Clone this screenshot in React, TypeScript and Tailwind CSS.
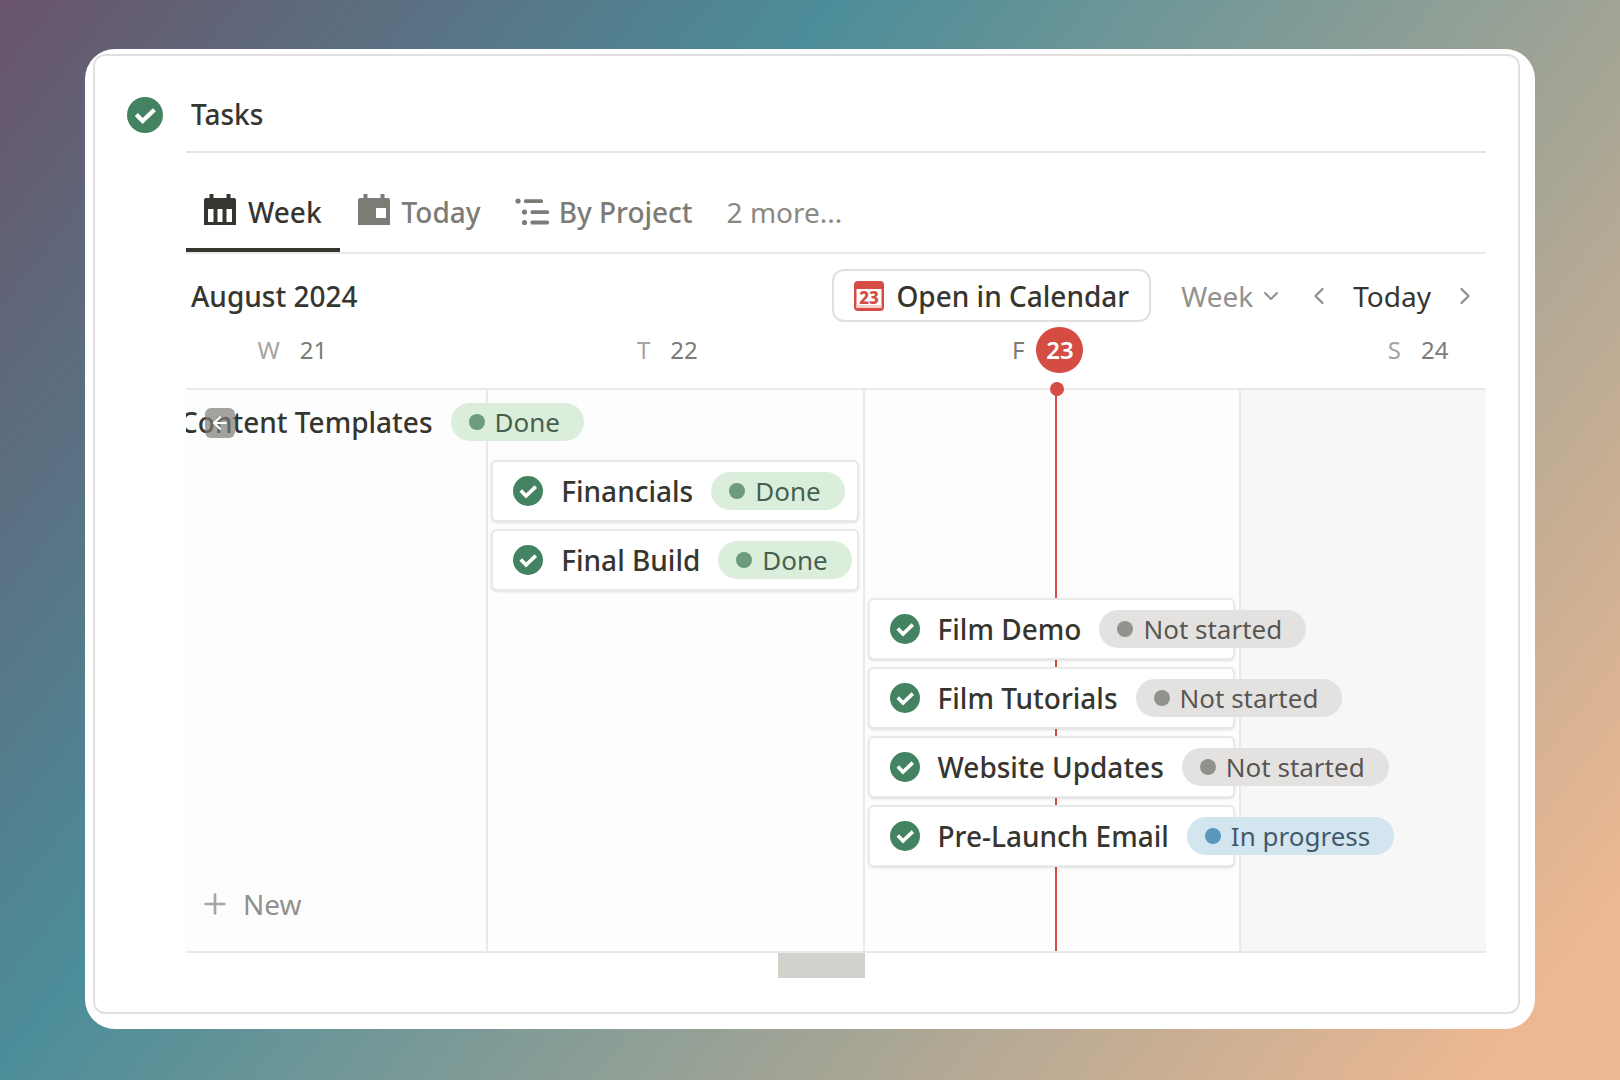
import clsx from "clsx"
import { ArrowLeft, ChevronDown, ChevronLeft, ChevronRight, Plus } from "lucide-react"

type Status = "Done" | "Not started" | "In progress"

const STATUS_STYLES: Record<Status, { pill: string; dot: string }> = {
  Done: { pill: "bg-[#dbeddb] text-[#1c3829]/80", dot: "bg-[#6c9b7d]" },
  "Not started": { pill: "bg-[#e3e2e0] text-[#32302c]/80", dot: "bg-[#91918e]" },
  "In progress": { pill: "bg-[#d3e5ef] text-[#183347]/80", dot: "bg-[#5b97bd]" },
}

type Task = { name: string; status: Status }

const THURSDAY_TASKS: Task[] = [
  { name: "Financials", status: "Done" },
  { name: "Final Build", status: "Done" },
]

const FRIDAY_TASKS: Task[] = [
  { name: "Film Demo", status: "Not started" },
  { name: "Film Tutorials", status: "Not started" },
  { name: "Website Updates", status: "Not started" },
  { name: "Pre-Launch Email", status: "In progress" },
]

function CheckIcon({ className }: { className: string }) {
  return (
    <svg viewBox="0 0 30 30" className={clsx("shrink-0", className)} aria-hidden="true">
      <circle cx="15" cy="15" r="15" fill="#448361" />
      <path d="M7.8 14.6 L13 20 L22.8 10.6" fill="none" stroke="#fff" strokeWidth="3.6" />
    </svg>
  )
}

function WeekIcon() {
  return (
    <svg viewBox="0 0 32 32" className="mb-1 size-8 shrink-0" aria-hidden="true">
      <path
        fill="currentColor"
        fillRule="evenodd"
        d="M5.5 0h4v4h13V0h4v4H30a2 2 0 0 1 2 2v25H0V6a2 2 0 0 1 2-2h3.5zM4 15v13h5.500V15zm9.500 0v13h5V15zm9 0v13H28V15z"
      />
    </svg>
  )
}

function TodayIcon() {
  return (
    <svg viewBox="0 0 32 32" className="mb-1 size-8 shrink-0" aria-hidden="true">
      <path
        fill="currentColor"
        fillRule="evenodd"
        d="M5.5 0h4v4h13V0h4v4H30a2 2 0 0 1 2 2v25H0V6a2 2 0 0 1 2-2h3.5zM18 14v10h10V14z"
      />
    </svg>
  )
}

function ProjectIcon() {
  return (
    <svg viewBox="0 0 34 28" className="h-7 w-[34px] shrink-0" aria-hidden="true" fill="currentColor">
      <circle cx="3" cy="3" r="2.6" />
      <circle cx="9.5" cy="14" r="2.6" />
      <circle cx="9.5" cy="24.5" r="2.6" />
      <rect x="9" y="1.2" width="19" height="3.8" rx="1.5" />
      <rect x="15.5" y="12.2" width="18.5" height="3.8" rx="1.5" />
      <rect x="15.5" y="22.6" width="18.5" height="3.8" rx="1.5" />
    </svg>
  )
}

function CalendarBadge() {
  return (
    <svg viewBox="0 0 30 30" className="size-[30px] shrink-0" aria-hidden="true">
      <rect width="30" height="30" rx="4" fill="#d44c43" />
      <rect x="2.5" y="8" width="25" height="19" fill="#fff" />
      <rect x="2.5" y="24" width="25" height="3" fill="#f4cfcc" />
      <text
        x="15"
        y="23"
        textAnchor="middle"
        fontFamily="Noto Sans, sans-serif"
        fontSize="17"
        fontWeight="800"
        fill="#d44c43"
      >
        23
      </text>
    </svg>
  )
}

function StatusPill({ status }: { status: Status }) {
  const styles = STATUS_STYLES[status]

  return (
    <span
      className={clsx(
        "flex h-[38px] shrink-0 items-center gap-[10px] rounded-full pr-6 pl-[18px] text-[26px] whitespace-nowrap",
        styles.pill
      )}
    >
      <span className={clsx("size-4 rounded-full", styles.dot)} />
      {status}
    </span>
  )
}

function TaskCard({ name, status }: Task) {
  return (
    <li className="flex h-[62px] items-center rounded-md border-2 border-[#e9e9e9] bg-white pl-5 shadow-sm">
      <CheckIcon className="size-[30px]" />
      <span className="mr-[18px] ml-[18px] shrink-0 font-medium whitespace-nowrap">{name}</span>
      <StatusPill status={status} />
    </li>
  )
}

export default function App() {
  return (
    <div className="flex min-h-screen bg-[linear-gradient(128deg,#69546b_0%,#4c8d99_34%,#ecb892_94%)] px-[85px] pt-[49px] pb-[51px] font-['Noto_Sans','Open_Sans',sans-serif] text-[28px] leading-8 text-[#37352f]">
      <main className="flex flex-1 overflow-hidden rounded-[30px] bg-white pt-[5px] pr-[15px] pb-[15px] pl-2">
        <section className="flex min-w-0 flex-1 flex-col rounded-xl border-2 border-[#e0e0e0] px-8">
          <header className="flex h-[97px] items-center">
            <CheckIcon className="mt-5 size-9" />
            <div className="ml-[23px] flex flex-1 self-stretch border-b-2 border-[#e3e3e3] pt-5 pl-[5px]">
              <h1 className="self-center font-medium">Tasks</h1>
            </div>
          </header>

          <div className="ml-[59px] flex flex-col">
            <nav className="flex h-[101px] items-end border-b-2 border-[#e9e9e9] font-medium text-[#7d7b76]">
              <button type="button" className="flex h-[76px] items-center gap-3 border-b-4 border-[#37352f] px-[18px] text-[#37352f]">
                <WeekIcon />
                Week
              </button>
              <button type="button" className="flex h-[76px] items-center gap-3 border-b-4 border-transparent px-[18px]">
                <TodayIcon />
                Today
              </button>
              <button type="button" className="flex h-[76px] items-center gap-[10px] border-b-4 border-transparent pr-[18px] pl-4">
                <ProjectIcon />
                By Project
              </button>
              <button type="button" className="flex h-[76px] items-center border-b-4 border-transparent px-4 font-normal text-[#8a8883]">
                2 more...
              </button>
            </nav>

            <div className="flex items-center pt-[15px] pr-[7px] pl-[5px]">
              <h2 className="flex-1 font-medium">August 2024</h2>
              <button type="button" className="flex h-[53px] items-center gap-3 rounded-xl border-2 border-[#e0e0e0] px-5 font-medium">
                <CalendarBadge />
                Open in Calendar
              </button>
              <button type="button" className="ml-[30px] flex items-center gap-1.5 text-[#91918e]">
                Week
                <ChevronDown className="size-6" />
              </button>
              <button type="button" aria-label="Previous week" className="ml-[22px] text-[#91918e]">
                <ChevronLeft className="size-7" />
              </button>
              <button type="button" className="mx-5">
                Today
              </button>
              <button type="button" aria-label="Next week" className="text-[#91918e]">
                <ChevronRight className="size-7" />
              </button>
            </div>

            <div className="grid h-[66px] grid-cols-[302fr_376fr_376fr_245fr] items-center pb-[10px] text-2xl text-[#7d7b76]">
              <div className="flex items-center justify-end gap-5 pr-[161px]">
                <span className="text-[#a5a4a0]">W</span>
                <span>21</span>
              </div>
              <div className="flex items-center justify-center gap-5 pr-[18px]">
                <span className="text-[#a5a4a0]">T</span>
                <span>22</span>
              </div>
              <div className="flex items-center justify-center gap-3 pr-[10px]">
                <span>F</span>
                <span className="flex h-[46px] w-[47px] items-center justify-center rounded-full bg-[#d44c43] font-semibold text-white">
                  23
                </span>
              </div>
              <div className="flex items-center gap-5 pl-[147px]">
                <span className="text-[#a5a4a0]">S</span>
                <span>24</span>
              </div>
            </div>

            <div className="relative">
              <div className="grid h-[565px] grid-cols-[302fr_376fr_376fr_245fr] overflow-hidden border-y-2 border-[#e9e9e9]">
                <div className="relative z-30 flex min-w-0 flex-col border-r-2 border-[#e9e9e9] bg-[#fdfdfd]">
                  <div className="-ml-[6px] flex h-16 items-center">
                    <span className="mr-[18px] shrink-0 font-medium whitespace-nowrap">Content Templates</span>
                    <StatusPill status="Done" />
                  </div>
                  <button
                    type="button"
                    aria-label="Scroll to start of task"
                    className="absolute top-[18px] left-[19px] flex size-[30px] items-center justify-center rounded-md bg-[#7d7b76]/70 text-white"
                  >
                    <ArrowLeft className="size-5" strokeWidth={2.5} />
                  </button>
                  <button type="button" className="mt-auto mb-[31px] flex items-center gap-3 pl-[13px] text-[#91918e]">
                    <Plus className="size-8 text-[#a5a4a0]" strokeWidth={2} />
                    New
                  </button>
                </div>
                <ul className="z-20 flex min-w-0 flex-col gap-[7px] border-r-2 border-[#e9e9e9] bg-[#fdfdfd] pt-[70px] pr-1 pl-[3px]">
                  {THURSDAY_TASKS.map((task) => (
                    <TaskCard key={task.name} {...task} />
                  ))}
                </ul>
                <div className="relative z-10 min-w-0 border-r-2 border-[#e9e9e9] bg-[#fdfdfd] pt-[208px] pr-1 pl-[3px]">
                  <div className="absolute inset-y-0 left-[51%] w-0.5 bg-[#d44c43]" />
                  <ul className="relative flex flex-col gap-[7px]">
                    {FRIDAY_TASKS.map((task) => (
                      <TaskCard key={task.name} {...task} />
                    ))}
                  </ul>
                </div>
                <div className="bg-[#f7f7f7]" />
              </div>
              <span className="absolute -top-[6px] left-[67%] z-40 size-[14px] -translate-x-1/2 rounded-full bg-[#d44c43]" />
            </div>
            <div className="ml-[592px] h-[25px] w-[87px] bg-[#d3d1cb]" />
          </div>
        </section>
      </main>
    </div>
  )
}
